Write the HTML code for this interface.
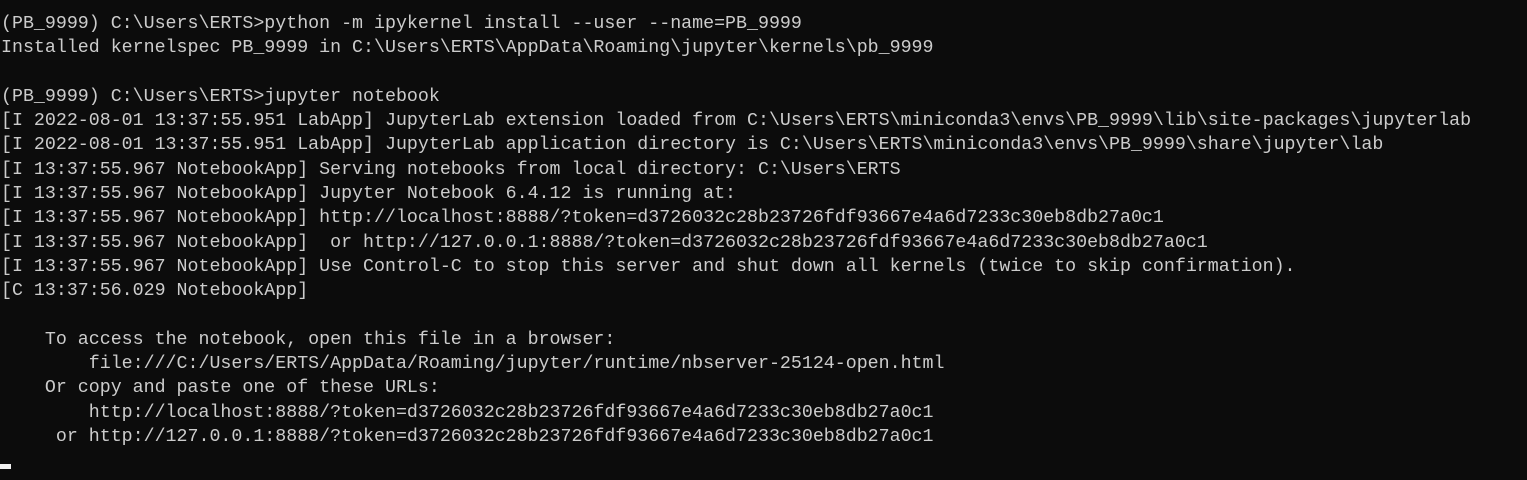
<!DOCTYPE html>
<html><head><meta charset="utf-8"><style>
html,body{margin:0;padding:0;background:#0c0c0c;width:1527px;height:480px;overflow:hidden}
pre{margin:0;padding:12px 0 0 1px;font-family:"Liberation Mono","DejaVu Sans Mono",monospace;font-size:18.29px;line-height:24.3px;color:#cccccc;white-space:pre}
.cur{position:absolute;left:0;top:464px;width:11px;height:5px;background:#f2f2f2}
</style></head><body>
<pre>(PB_9999) C:\Users\ERTS&gt;python -m ipykernel install --user --name=PB_9999
Installed kernelspec PB_9999 in C:\Users\ERTS\AppData\Roaming\jupyter\kernels\pb_9999

(PB_9999) C:\Users\ERTS&gt;jupyter notebook
[I 2022-08-01 13:37:55.951 LabApp] JupyterLab extension loaded from C:\Users\ERTS\miniconda3\envs\PB_9999\lib\site-packages\jupyterlab
[I 2022-08-01 13:37:55.951 LabApp] JupyterLab application directory is C:\Users\ERTS\miniconda3\envs\PB_9999\share\jupyter\lab
[I 13:37:55.967 NotebookApp] Serving notebooks from local directory: C:\Users\ERTS
[I 13:37:55.967 NotebookApp] Jupyter Notebook 6.4.12 is running at:
[I 13:37:55.967 NotebookApp] http://localhost:8888/?token=d3726032c28b23726fdf93667e4a6d7233c30eb8db27a0c1
[I 13:37:55.967 NotebookApp]  or http://127.0.0.1:8888/?token=d3726032c28b23726fdf93667e4a6d7233c30eb8db27a0c1
[I 13:37:55.967 NotebookApp] Use Control-C to stop this server and shut down all kernels (twice to skip confirmation).
[C 13:37:56.029 NotebookApp]

    To access the notebook, open this file in a browser:
        file:///C:/Users/ERTS/AppData/Roaming/jupyter/runtime/nbserver-25124-open.html
    Or copy and paste one of these URLs:
        http://localhost:8888/?token=d3726032c28b23726fdf93667e4a6d7233c30eb8db27a0c1
     or http://127.0.0.1:8888/?token=d3726032c28b23726fdf93667e4a6d7233c30eb8db27a0c1
</pre>
<div class="cur"></div>
</body></html>
